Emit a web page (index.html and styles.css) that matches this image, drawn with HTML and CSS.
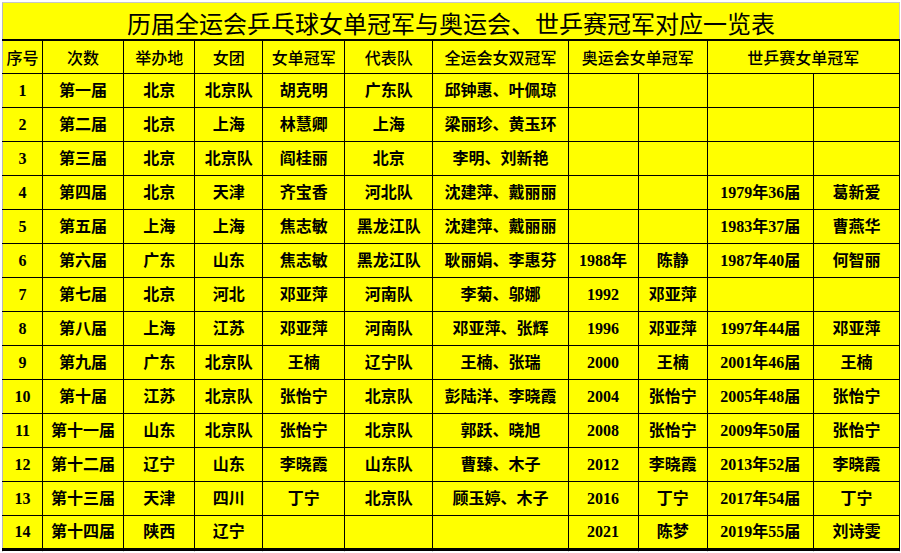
FILE: index.html
```html
<!DOCTYPE html>
<html lang="zh">
<head>
<meta charset="utf-8">
<link rel="stylesheet" href="styles.css">
</head>
<body>
<table class="sheet">
  <colgroup>
    <col class="c1"><col class="c2"><col class="c3"><col class="c4"><col class="c5"><col class="c6"><col class="c7"><col class="c8"><col class="c9"><col class="c10"><col class="c11">
  </colgroup>
  <tr class="title-row"><td colspan="11" class="title">历届全运会乒乓球女单冠军与奥运会、世乒赛冠军对应一览表</td></tr>
  <tr class="head-row">
    <th>序号</th><th>次数</th><th>举办地</th><th>女团</th><th>女单冠军</th><th>代表队</th><th>全运会女双冠军</th><th colspan="2">奥运会女单冠军</th><th colspan="2">世乒赛女单冠军</th>
  </tr>
  <tr><td>1</td><td>第一届</td><td>北京</td><td>北京队</td><td>胡克明</td><td>广东队</td><td>邱钟惠、叶佩琼</td><td></td><td></td><td></td><td></td></tr>
  <tr><td>2</td><td>第二届</td><td>北京</td><td>上海</td><td>林慧卿</td><td>上海</td><td>梁丽珍、黄玉环</td><td></td><td></td><td></td><td></td></tr>
  <tr><td>3</td><td>第三届</td><td>北京</td><td>北京队</td><td>阎桂丽</td><td>北京</td><td>李明、刘新艳</td><td></td><td></td><td></td><td></td></tr>
  <tr><td>4</td><td>第四届</td><td>北京</td><td>天津</td><td>齐宝香</td><td>河北队</td><td>沈建萍、戴丽丽</td><td></td><td></td><td>1979年36届</td><td>葛新爱</td></tr>
  <tr><td>5</td><td>第五届</td><td>上海</td><td>上海</td><td>焦志敏</td><td>黑龙江队</td><td>沈建萍、戴丽丽</td><td></td><td></td><td>1983年37届</td><td>曹燕华</td></tr>
  <tr><td>6</td><td>第六届</td><td>广东</td><td>山东</td><td>焦志敏</td><td>黑龙江队</td><td>耿丽娟、李惠芬</td><td>1988年</td><td>陈静</td><td>1987年40届</td><td>何智丽</td></tr>
  <tr><td>7</td><td>第七届</td><td>北京</td><td>河北</td><td>邓亚萍</td><td>河南队</td><td>李菊、邬娜</td><td>1992</td><td>邓亚萍</td><td></td><td></td></tr>
  <tr><td>8</td><td>第八届</td><td>上海</td><td>江苏</td><td>邓亚萍</td><td>河南队</td><td>邓亚萍、张辉</td><td>1996</td><td>邓亚萍</td><td>1997年44届</td><td>邓亚萍</td></tr>
  <tr><td>9</td><td>第九届</td><td>广东</td><td>北京队</td><td>王楠</td><td>辽宁队</td><td>王楠、张瑞</td><td>2000</td><td>王楠</td><td>2001年46届</td><td>王楠</td></tr>
  <tr><td>10</td><td>第十届</td><td>江苏</td><td>北京队</td><td>张怡宁</td><td>北京队</td><td>彭陆洋、李晓霞</td><td>2004</td><td>张怡宁</td><td>2005年48届</td><td>张怡宁</td></tr>
  <tr><td>11</td><td>第十一届</td><td>山东</td><td>北京队</td><td>张怡宁</td><td>北京队</td><td>郭跃、晓旭</td><td>2008</td><td>张怡宁</td><td>2009年50届</td><td>张怡宁</td></tr>
  <tr><td>12</td><td>第十二届</td><td>辽宁</td><td>山东</td><td>李晓霞</td><td>山东队</td><td>曹臻、木子</td><td>2012</td><td>李晓霞</td><td>2013年52届</td><td>李晓霞</td></tr>
  <tr><td>13</td><td>第十三届</td><td>天津</td><td>四川</td><td>丁宁</td><td>北京队</td><td>顾玉婷、木子</td><td>2016</td><td>丁宁</td><td>2017年54届</td><td>丁宁</td></tr>
  <tr class="last-row"><td>14</td><td>第十四届</td><td>陕西</td><td>辽宁</td><td></td><td></td><td></td><td>2021</td><td>陈梦</td><td>2019年55届</td><td>刘诗雯</td></tr>
  <tr class="tail"><td></td><td></td><td></td><td></td><td></td><td></td><td></td><td></td><td></td><td></td><td></td></tr>
</table>
</body>
</html>
```

FILE: styles.css
```css
html, body {
  margin: 0;
  padding: 0;
  background: #ffffff;
}

.sheet {
  margin: 2px 0 0 2px;
  border-collapse: collapse;
  table-layout: fixed;
  width: 898px;
  font-family: "Liberation Serif", "Noto Sans CJK SC", serif;
  color: #000;
}

.c1 { width: 40px; }
.c2 { width: 81px; }
.c3 { width: 71px; }
.c4 { width: 68px; }
.c5 { width: 82px; }
.c6 { width: 88px; }
.c7 { width: 135px; }
.c8 { width: 70px; }
.c9 { width: 69px; }
.c10 { width: 106px; }
.c11 { width: 86px; }

.sheet td, .sheet th {
  background: #ffff00;
  border: 1px solid #000;
  text-align: center;
  vertical-align: middle;
  padding: 0;
  white-space: nowrap;
  overflow: hidden;
  font-size: 16px;
  font-weight: 700;
  line-height: 20px;
}

.sheet tr {
  height: 34px;
}

.sheet .title-row {
  height: 37px;
}

.sheet .title {
  font-family: "Noto Sans CJK SC", sans-serif;
  font-size: 24px;
  font-weight: 400;
  line-height: 28px;
  padding-top: 5px;
  border: 1px solid #c6c6c6;
  border-bottom: 2px solid #000;
}

.sheet th {
  font-family: "Noto Sans CJK SC", sans-serif;
  font-weight: 500;
}

.sheet tr > :first-child {
  border-left-color: #b8b8b8;
}

.sheet .last-row td {
  border-bottom: 3px solid #000;
}

.sheet .tail {
  height: 2px;
}

.sheet .tail td {
  background: #ffffff;
  border-top: 3px solid #000;
  border-bottom: none;
  border-left: 1px solid #d4d4d4;
  border-right: 1px solid #d4d4d4;
}
```
